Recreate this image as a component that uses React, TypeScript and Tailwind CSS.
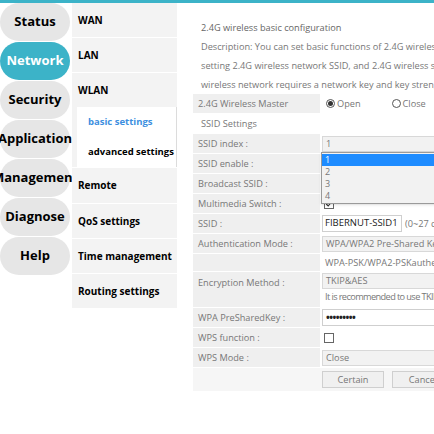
import React from "react";

const navItems = ["Status", "Network", "Security", "Application", "Management", "Diagnose", "Help"];

function Radio({ checked }: { checked?: boolean }) {
  return (
    <span className="flex h-[9px] w-[9px] items-center justify-center rounded-full border border-[#555] bg-white">
      {checked && <span className="h-[5px] w-[5px] rounded-full bg-[#333]" />}
    </span>
  );
}

function Checkbox({ checked }: { checked?: boolean }) {
  return (
    <span className="flex h-[10px] w-[10px] items-center justify-center border border-[#666] bg-white">
      {checked && (
        <svg viewBox="0 0 10 10" className="h-[8px] w-[8px]">
          <path d="M1.5 5 L4 7.5 L8.5 2" fill="none" stroke="#333" strokeWidth="1.4" />
        </svg>
      )}
    </span>
  );
}

function Row({
  label,
  children,
  h = "h-[19px]",
  top = false,
}: {
  label?: string;
  children?: React.ReactNode;
  h?: string;
  top?: boolean;
}) {
  return (
    <div className={`flex ${h} mb-px ${top ? "items-start" : "items-center"}`}>
      <div className={`flex h-full w-[127px] shrink-0 bg-[#efefef] pl-[5px] ${top ? "items-start pt-[4px]" : "items-center"}`}>
        {label}
      </div>
      <div className={`flex h-full flex-1 bg-white pl-[2px] ${top ? "flex-col" : "items-center"}`}>{children}</div>
    </div>
  );
}

function SelectBox({ value, w = "w-[120px]" }: { value: string; w?: string }) {
  return (
    <div className={`flex h-[16px] ${w} items-center border border-[#d8d8d8] bg-[#f2f2f2] pl-[3px] text-[#777]`}>
      {value}
    </div>
  );
}

export default function App() {
  return (
    <div className="h-[434px] w-[434px] overflow-hidden bg-white" style={{ fontFamily: '"Open Sans", "Noto Sans", sans-serif' }}>
      <div className="h-[3px] w-full bg-[#3cb3c8]" />
      <div className="flex">
        {/* main nav */}
        <div className="mr-[2px] flex w-[70px] shrink-0 flex-col gap-px">
          {navItems.map((item) => (
            <div
              key={item}
              className={`flex h-[38px] items-center justify-center whitespace-nowrap rounded-full text-[13px] font-bold ${
                item === "Network" ? "bg-[#3cb3c8] text-white" : "bg-[#e6e6e6] text-black"
              }`}
            >
              {item}
            </div>
          ))}
        </div>

        {/* sub nav */}
        <div className="relative z-10 flex w-[105px] shrink-0 flex-col gap-px bg-white text-[10px] font-bold text-black">
          <div className="flex h-[34px] items-center bg-[#f3f3f3] pl-[6px]">WAN</div>
          <div className="flex h-[34px] items-center bg-[#f3f3f3] pl-[6px]">LAN</div>
          <div className="flex flex-col bg-[#f3f3f3]">
            <div className="flex h-[34px] items-center pl-[6px]">WLAN</div>
            <div className="ml-[5px] flex h-[60px] flex-col border-r border-[#dcdcdc] bg-white pl-[11px] text-[9.5px]">
              <div className="flex h-[30px] items-center text-[#3d8fe0]">basic settings</div>
              <div className="flex h-[30px] items-center">advanced settings</div>
            </div>
          </div>
          <div className="flex h-[35px] items-center bg-[#f3f3f3] pl-[6px]">Remote</div>
          <div className="flex h-[34px] items-center bg-[#f3f3f3] pl-[6px]">QoS settings</div>
          <div className="flex h-[34px] items-center bg-[#f3f3f3] pl-[6px]">Time management</div>
          <div className="flex h-[34px] items-center bg-[#f3f3f3] pl-[6px]">Routing settings</div>
        </div>

        {/* content */}
        <div className="ml-[16px] w-[330px] shrink-0 whitespace-nowrap pt-[15px] text-[9.2px] text-[#777]">
          <div className="pl-[8px] leading-[19px]">
            <div className="text-[#666]">2.4G wireless basic configuration</div>
            <div>Description: You can set basic functions of 2.4G wireless network, such as</div>
            <div>setting 2.4G wireless network SSID, and 2.4G wireless security, the</div>
            <div>wireless network requires a network key and key strength.</div>
          </div>

          <Row label="2.4G Wireless Master">
            <div className="flex items-center gap-[2px] pl-[4px]">
              <Radio checked />
              <span>Open</span>
            </div>
            <div className="ml-[31px] flex items-center gap-[2px]">
              <Radio />
              <span>Close</span>
            </div>
          </Row>

          <div className="mb-px flex h-[19px] items-center pl-[8px]">SSID Settings</div>

          <Row label="SSID index :">
            <div className="relative">
              <SelectBox value="1" />
              <div className="absolute left-[-1px] top-[16px] z-20 w-[130px] border border-[#9a9a9a] bg-[#f2f2f2] py-[1px] text-[9px] shadow-sm">
                <div className="flex h-[12px] items-center bg-[#1e8cff] pl-[3px] text-white">1</div>
                <div className="flex h-[12px] items-center pl-[3px] text-[#777]">2</div>
                <div className="flex h-[12px] items-center pl-[3px] text-[#777]">3</div>
                <div className="flex h-[12px] items-center pl-[3px] text-[#777]">4</div>
              </div>
            </div>
          </Row>
          <Row label="SSID enable :">
            <div className="pl-[2px]">
              <Checkbox checked />
            </div>
          </Row>
          <Row label="Broadcast SSID :">
            <div className="pl-[2px]">
              <Checkbox checked />
            </div>
          </Row>
          <Row label="Multimedia Switch :">
            <div className="pl-[2px]">
              <Checkbox checked />
            </div>
          </Row>
          <Row label="SSID :">
            <div className="flex h-[17px] w-[80px] items-center overflow-hidden border border-[#cfcfcf] bg-white pl-[2px] text-[9.5px] text-[#222]">
              FIBERNUT-SSID1
            </div>
            <span className="ml-[3px]">(0~27 characters)</span>
          </Row>
          <Row label="Authentication Mode :">
            <SelectBox value="WPA/WPA2 Pre-Shared Key" />
          </Row>
          <Row label="" h="h-[17px]">
            <span className="pl-[3px]">WPA-PSK/WPA2-PSKauthentication</span>
          </Row>
          <Row label="Encryption Method :" h="h-[35px]" top>
            <div className="mt-[1px]">
              <SelectBox value="TKIP&AES" />
            </div>
            <span className="mt-[1px] pl-[3px] tracking-[-0.6px]">It is recommended to use TKIP&AES</span>
          </Row>
          <Row label="WPA PreSharedKey :">
            <div className="flex h-[17px] w-[120px] items-center border border-[#cfcfcf] bg-white pl-[3px] text-[10px] font-bold tracking-[-0.5px] text-[#222]">
              •••••••••
            </div>
          </Row>
          <Row label="WPS function :">
            <div className="pl-[2px]">
              <Checkbox />
            </div>
          </Row>
          <Row label="WPS Mode :">
            <SelectBox value="Close" />
          </Row>
          <div className="flex h-[23px] items-center bg-[#f6f6f6] pl-[129px]">
            <div className="flex h-[17px] w-[62px] items-center justify-center border border-[#cfcfcf] bg-[#f0f0f0]">Certain</div>
            <div className="ml-[8px] flex h-[17px] w-[62px] items-center justify-center border border-[#cfcfcf] bg-[#f0f0f0]">Cancel</div>
          </div>
        </div>
      </div>
    </div>
  );
}
